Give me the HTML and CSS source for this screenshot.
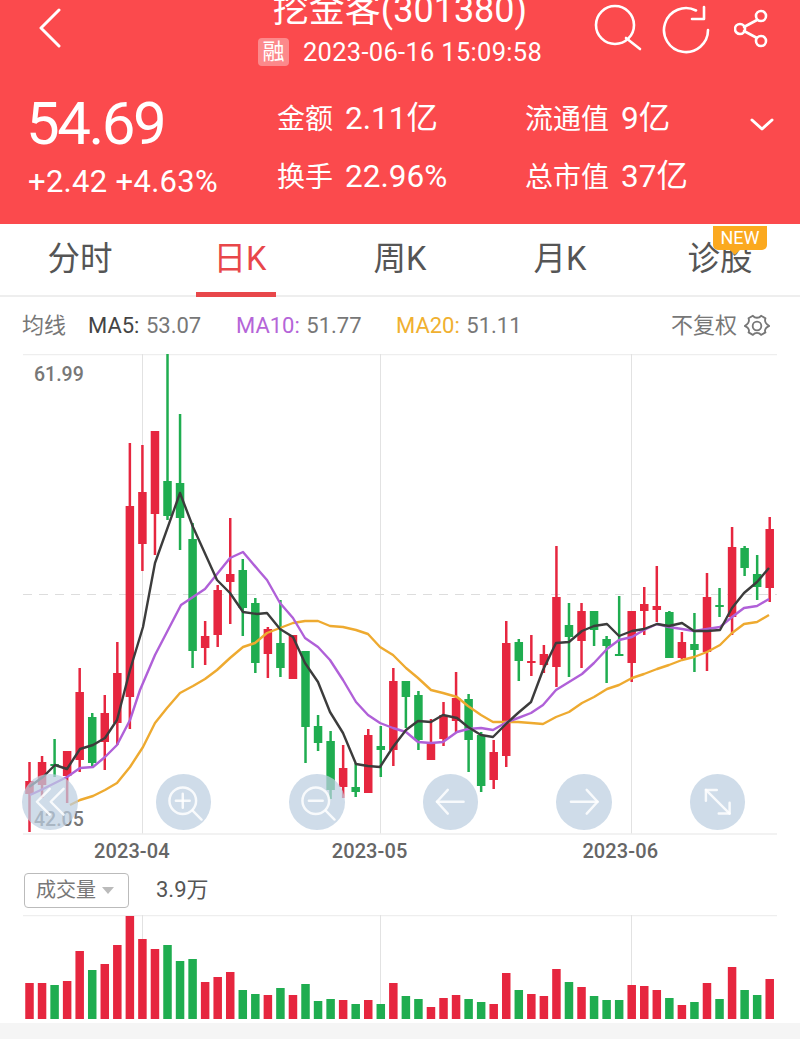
FILE: index.html
```html
<!DOCTYPE html>
<html lang="zh-CN">
<head>
  <meta charset="UTF-8">
  <meta name="viewport" content="width=device-width, initial-scale=1.0">
  <title>挖金客(301380)</title>
  <link rel="stylesheet" href="styles.css">
</head>
<body>
  <header class="quote">
    <div class="topbar">
      <svg class="back" viewBox="0 0 24 40" width="24" height="40"><polyline points="21,2 3,20 21,38"/></svg>
      <div class="heading">
        <h1>挖金客(301380)</h1>
        <div class="stamp"><span class="tag">融</span><span>2023-06-16 15:09:58</span></div>
      </div>
      <div class="actions">
        <svg viewBox="0 0 50 54" width="50" height="54">
          <circle cx="22" cy="25" r="19"/>
          <line x1="33" y1="38" x2="47" y2="49"/>
        </svg>
        <svg viewBox="0 0 50 54" width="50" height="54">
          <path d="M34 10.5A22 22 0 1 0 46 30"/>
          <polyline points="42,7 42,19 30,19"/>
        </svg>
        <svg viewBox="0 0 36 54" width="36" height="54">
          <line x1="23" y1="20" x2="10" y2="27"/>
          <line x1="10" y1="31" x2="23" y2="38"/>
          <circle cx="27" cy="16" r="5"/>
          <circle cx="6" cy="29" r="5"/>
          <circle cx="27" cy="41" r="5"/>
        </svg>
      </div>
    </div>
    <div class="summary">
      <div class="price">
        <div class="last">54.69</div>
        <div class="change">+2.42 +4.63%</div>
      </div>
      <div class="stat-col">
        <div class="stat"><span class="stat-name">金额</span>2.11亿</div>
        <div class="stat"><span class="stat-name">换手</span>22.96%</div>
      </div>
      <div class="stat-col">
        <div class="stat"><span class="stat-name">流通值</span>9亿</div>
        <div class="stat"><span class="stat-name">总市值</span>37亿</div>
      </div>
      <svg class="more" viewBox="0 0 24 14" width="24" height="14"><polyline points="2,2 12,11 22,2"/></svg>
    </div>
  </header>

  <nav class="tabs">
    <div class="tab">分时</div>
    <div class="tab active">日K</div>
    <div class="tab">周K</div>
    <div class="tab">月K</div>
    <div class="tab">诊股<span class="badge">NEW</span></div>
  </nav>

  <div class="legend">
    <span class="legend-title">均线</span>
    <span class="ma ma5">MA5: <em>53.07</em></span>
    <span class="ma ma10">MA10: <em>51.77</em></span>
    <span class="ma ma20">MA20: <em>51.11</em></span>
    <span class="adjust"><span class="adjust-name">不复权</span>
      <svg viewBox="0 0 24 24" width="26" height="26">
        <path d="M8.200 2.600c1 1.200 2.200 1.800 3.800 1.800s2.800-.6 3.800-1.800l4 2.300c-.6 1.500-.5 2.900.3 4.200s2 2.100 3.200 2.900c-1.200.8-2.400 1-3.200 2.300s-.9 2.700-.3 3.600l-4 2.300c-1-1.200-2.200-1.800-3.800-1.800s-2.800.6-3.800 1.800l-4-2.300c.6-.9.5-2.300-.3-3.600s-2-1.500-3.200-2.300c1.200-.8 2.400-1.600 3.200-2.900s.9-2.700.3-4.200z"/>
        <circle cx="12" cy="12" r="4"/>
      </svg>
    </span>
  </div>

  <section class="kline">
    <svg id="kline-chart" viewBox="0 354 800 481" width="800" height="481"></svg>
    <span class="axis-label axis-high">61.99</span>
    <span class="axis-label axis-low">42.05</span>
    <div class="chart-btns">
      <button class="chart-btn"><svg viewBox="0 0 40 40"><polyline points="20,7 7,20 20,33"/><polyline points="34,7 21,20 34,33"/></svg></button>
      <button class="chart-btn"><svg viewBox="0 0 40 40"><circle cx="19" cy="19" r="13.500"/><line x1="29" y1="29" x2="38" y2="38"/><line x1="12" y1="19" x2="26" y2="19"/><line x1="19" y1="12" x2="19" y2="26"/></svg></button>
      <button class="chart-btn"><svg viewBox="0 0 40 40"><circle cx="19" cy="19" r="13.500"/><line x1="29" y1="29" x2="38" y2="38"/><line x1="12" y1="19" x2="26" y2="19"/></svg></button>
      <button class="chart-btn"><svg viewBox="0 0 40 40"><polyline points="17,8 6,20 17,32"/><line x1="6" y1="20" x2="33" y2="20"/></svg></button>
      <button class="chart-btn"><svg viewBox="0 0 40 40"><polyline points="23,8 34,20 23,32"/><line x1="7" y1="20" x2="34" y2="20"/></svg></button>
      <button class="chart-btn"><svg viewBox="0 0 40 40"><line x1="8" y1="8" x2="32" y2="32"/><polyline points="8,19 8,8 19,8"/><polyline points="21,32 32,32 32,21"/></svg></button>
    </div>
  </section>

  <div class="dates">
    <span class="date date-apr">2023-04</span>
    <span class="date date-may">2023-05</span>
    <span class="date date-jun">2023-06</span>
  </div>

  <div class="vol-head">
    <div class="vol-select"><span class="vol-name">成交量</span><i class="caret"></i></div>
    <div class="vol-value">3.9万</div>
  </div>

  <svg id="vol-chart" viewBox="0 915 800 108" width="800" height="108"></svg>
  <div class="foot"></div>

  <script src="chart.js"></script>
</body>
</html>
```
FILE: styles.css
```css
* {
  box-sizing: border-box;
}

html, body {
  height: 100%;
}

body {
  margin: 0;
  overflow: hidden;
  background-color: #fff;
  font-family: Roboto, "Noto Sans CJK SC", sans-serif;
  color: #666;
}

/* red quote header */
.quote {
  height: 224px;
  background-color: #fb4a4d;
  color: #fff;
  overflow: hidden;
}

.quote svg {
  fill: none;
  stroke: #fff;
  stroke-linecap: round;
  stroke-linejoin: round;
}

.topbar {
  display: flex;
  height: 72px;
  margin-top: -10px;
  position: relative;
}

.back {
  margin: 18px 0 0 38px;
  stroke-width: 3;
}

.heading {
  position: absolute;
  left: 0;
  right: 0;
  top: 0;
  text-align: center;
}

.heading h1 {
  margin: 0;
  font-size: 36px;
  font-weight: 400;
  line-height: 40px;
}

.stamp {
  display: flex;
  justify-content: center;
  align-items: center;
  gap: 14px;
  margin-top: 7px;
  font-size: 25.500px;
  line-height: 30px;
  letter-spacing: 0.3px;
}

.tag {
  width: 31px;
  height: 28px;
  border-radius: 4px;
  background-color: rgba(255, 255, 255, 0.35);
  font-size: 22px;
  line-height: 28px;
  text-align: center;
  letter-spacing: 0;
}

.actions {
  display: flex;
  margin-left: auto;
  margin-right: 30px;
  padding-top: 10px;
}

.actions svg {
  stroke-width: 2.600;
  margin-left: 22px;
}

.actions svg:first-child {
  margin-left: 0;
}

.actions svg:nth-child(2) {
  margin-left: 19px;
}

.summary {
  display: flex;
  padding: 32px 0 0 26px;
  position: relative;
}

.price {
  width: 251px;
}

.last {
  font-size: 60px;
  line-height: 60px;
  letter-spacing: -2.500px;
}

.change {
  margin: 10px 0 0 2px;
  font-size: 31px;
  line-height: 36px;
  letter-spacing: 0.3px;
}

.stat-col {
  width: 248px;
  margin-top: 1px;
}

.stat {
  height: 58px;
  font-size: 31.500px;
  line-height: 48px;
}

.stat-name {
  margin-right: 12px;
  font-size: 28px;
}

.more {
  position: absolute;
  left: 750px;
  top: 56px;
  stroke-width: 3;
}

/* period tabs */
.tabs {
  display: flex;
  height: 73px;
  border-bottom: 2px solid #eee;
}

.tab {
  flex: 1;
  position: relative;
  font-size: 32.500px;
  line-height: 70px;
  text-align: center;
  color: #555;
}

.tab.active {
  color: #e8474a;
}

.tab.active::after {
  content: "";
  position: absolute;
  left: 36px;
  right: 44px;
  bottom: -2px;
  height: 5px;
  background-color: #e8474a;
}

.badge {
  position: absolute;
  left: 73px;
  top: 2px;
  width: 54px;
  height: 24px;
  border-radius: 0 0 5px 5px;
  background-color: #fba91f;
  color: #fff;
  font-size: 18px;
  line-height: 24px;
}

.badge::after {
  content: "";
  position: absolute;
  left: 17px;
  top: 24px;
  border: 5px solid transparent;
  border-top-color: #fba91f;
  border-bottom: 0;
}

/* moving average legend */
.legend {
  display: flex;
  align-items: center;
  height: 57px;
  padding: 0 30px 0 22px;
  font-size: 22px;
  color: #777;
}

.legend-title {
  width: 66px;
  margin-top: -5px;
}

.ma {
  white-space: pre;
}

.ma em {
  margin-left: 1px;
  font-style: normal;
  color: #777;
}

.ma5 {
  width: 148px;
  color: #444;
}

.ma10 {
  width: 160px;
  color: #b565d8;
}

.ma20 {
  color: #f0b030;
}

.adjust {
  display: flex;
  align-items: center;
  gap: 7px;
  margin-left: auto;
}

.adjust-name {
  margin-top: -5px;
}

.adjust svg {
  fill: none;
  stroke: #777;
  stroke-width: 1.700;
  stroke-linejoin: round;
}

/* k line chart */
.kline {
  position: relative;
  height: 481px;
}

#kline-chart, #vol-chart {
  display: block;
}

.axis-label {
  position: absolute;
  left: 34px;
  font-size: 19.500px;
  font-weight: 500;
  color: #777;
}

.axis-high {
  top: 9px;
}

.axis-low {
  top: 454px;
}

.chart-btns {
  position: absolute;
  left: 22px;
  top: 420px;
  display: flex;
  gap: 78px;
}

.chart-btn {
  width: 55.500px;
  height: 55.500px;
  padding: 8px;
  border: 0;
  border-radius: 50%;
  background-color: rgba(188, 206, 224, 0.72);
}

.chart-btn svg {
  display: block;
  fill: none;
  stroke: rgba(255, 255, 255, 0.85);
  stroke-width: 2.500;
  stroke-linecap: round;
  stroke-linejoin: round;
}

/* date axis */
.dates {
  display: flex;
  height: 38px;
  padding-left: 94px;
  font-size: 20px;
  font-weight: 500;
  line-height: 32px;
  letter-spacing: 0.1px;
  color: #666;
}

.date-may {
  margin-left: 162px;
}

.date-jun {
  margin-left: 175px;
}

/* volume */
.vol-head {
  display: flex;
  align-items: center;
  height: 42px;
  padding-left: 24px;
}

.vol-select {
  display: flex;
  align-items: center;
  width: 105px;
  height: 35px;
  margin-bottom: 7px;
  padding-left: 11px;
  border: 1px solid #bbb;
  border-radius: 4px;
  font-size: 20px;
  color: #777;
}

.vol-name {
  margin-top: -4px;
}

.caret {
  margin-left: 6px;
  border: 6px solid transparent;
  border-top: 7px solid #bbb;
  border-bottom: 0;
}

.vol-value {
  margin: 0 0 14px 27px;
  font-size: 22px;
  color: #555;
}

.foot {
  height: 20px;
  background-color: #f5f5f5;
}
```
FILE: chart.js
```js
// [color, high, top, bottom, low] in page pixels
const candles = [
  ['r',762,781,794,832],['r',756,762,785,798],['g',739,764,766,777],['r',751,751,776,803],
  ['r',668,692,760,772],['g',713,717,763,766],['r',695,713,742,770],['r',642,673,723,745],
  ['r',443,506,697,729],['r',445,492,544,571],['r',431,431,514,555],['g',354,481,516,520],
  ['g',414,483,518,550],['g',523,539,651,668],['r',621,636,648,665],['r',585,590,635,647],
  ['r',518,574,582,624],['g',559,570,608,636],['g',598,603,663,673],['r',627,629,654,678],
  ['g',600,643,668,677],['r',635,635,679,679],['g',651,651,727,763],['g',715,726,743,751],
  ['g',731,741,790,799],['r',745,768,787,798],['g',763,787,792,797],['r',729,735,793,793],
  ['g',726,746,750,777],['r',668,681,750,766],['g',681,681,697,728],['g',691,695,740,750],
  ['r',719,744,760,760],['r',702,715,739,746],['r',672,698,721,732],['g',694,699,740,772],
  ['g',732,735,786,792],['r',740,752,780,789],['r',621,643,756,767],['g',639,642,661,681],
  ['r',635,661,663,676],['r',645,654,665,673],['r',546,597,667,687],['g',603,625,637,677],
  ['r',603,611,641,668],['g',611,611,630,646],['g',636,639,646,683],['g',596,654,656,656],
  ['r',611,611,663,682],['r',587,604,611,635],['r',566,606,610,622],['g',611,612,658,658],
  ['r',632,642,658,659],['g',613,644,650,672],['r',573,597,652,671],['g',588,605,607,617],
  ['r',527,547,617,635],['g',546,548,568,576],['g',555,574,587,600],['r',517,529,588,602]
];

const volumes = [
  ['r',983],['r',983],['g',985],['r',981],['r',951],['g',970],['r',964],['r',945],['r',916],['r',939],
  ['r',949],['g',945],['g',961],['g',959],['r',982],['r',977],['r',972],['g',990],['g',994],['r',995],
  ['g',988],['r',995],['g',984],['g',1001],['g',999],['r',1000],['g',1004],['r',1000],['g',1004],['r',983],
  ['g',996],['g',999],['r',1007],['r',998],['r',995],['g',999],['g',1002],['r',1004],['r',973],['g',990],
  ['r',994],['r',996],['r',969],['g',982],['r',987],['g',996],['g',1000],['g',1000],['r',985],['r',986],
  ['r',990],['g',998],['r',1005],['g',1002],['r',983],['g',999],['r',967],['g',990],['g',995],['r',979]
];

const ma5 = '29,787 43,777 55,765 67,769 80,749 93,745 105,738 117,720 130,670 143,627 155,563 180,493 193,527 217,580 230,593 243,612 257,614 267,613 280,629 293,637 305,663 318,682 330,712 343,733 356,764 368,766 380,767 393,747 406,730 418,721 431,722 443,715 457,718 468,727 481,735 493,737 507,723 518,713 531,702 543,670 556,643 569,642 582,631 594,626 607,624 619,636 632,631 644,629 657,624 669,626 682,623 694,631 707,631 720,630 732,608 744,593 757,582 769,568';
const ma10 = '30,795 43,789 55,783 67,777 80,768 93,767 105,757 117,745 130,720 140,690 155,655 181,605 205,589 230,558 243,552 260,572 267,580 280,603 293,618 305,638 318,647 330,660 343,680 356,702 368,715 380,723 393,728 406,732 418,742 431,743 443,742 457,732 468,729 481,728 493,730 507,722 518,718 531,713 543,705 556,690 569,682 582,674 594,663 607,649 619,640 632,637 644,630 657,624 669,627 682,629 694,631 707,629 720,627 732,617 744,608 757,606 769,599';
const ma20 = '70,805 80,800 93,796 105,790 117,783 130,767 143,747 155,723 167,708 180,693 193,686 205,679 217,670 230,658 243,647 255,643 267,633 280,628 293,623 305,621 318,621 330,626 343,627 356,630 368,634 380,647 393,655 406,668 418,678 431,690 443,693 457,697 468,706 481,715 493,722 507,722 518,722 531,723 543,724 556,717 569,712 582,703 594,697 607,689 619,685 632,678 644,674 657,669 669,665 682,660 694,657 707,652 720,645 732,633 744,624 757,622 769,615';

const COLORS = { r: '#e6263f', g: '#1fad50' };
const GRID_X = [142.5, 380.5, 631.5];

function shape(svg, name, attrs) {
  const el = document.createElementNS('http://www.w3.org/2000/svg', name);
  Object.keys(attrs).forEach(key => el.setAttribute(key, attrs[key]));
  svg.appendChild(el);
}

function centerX(i) {
  return 29.5 + i * 12.546;
}

function drawGrid(svg, top, bottom) {
  shape(svg, 'line', { x1: 23, x2: 777, y1: top + 0.5, y2: top + 0.5, stroke: '#eee', 'stroke-width': 1.5 });
  GRID_X.forEach(x => {
    shape(svg, 'line', { x1: x, x2: x, y1: top, y2: bottom, stroke: '#e2e2e2', 'stroke-width': 1 });
  });
}

const kline = document.getElementById('kline-chart');
drawGrid(kline, 354, 834);
shape(kline, 'line', { x1: 23, x2: 777, y1: 834, y2: 834, stroke: '#eee', 'stroke-width': 1.5 });
shape(kline, 'line', { x1: 23, x2: 777, y1: 594.5, y2: 594.5, stroke: '#ddd', 'stroke-width': 1, 'stroke-dasharray': '9 7' });

candles.forEach((c, i) => {
  const x = centerX(i);
  shape(kline, 'line', { x1: x, x2: x, y1: c[1], y2: c[4], stroke: COLORS[c[0]], 'stroke-width': 2.5 });
  shape(kline, 'rect', { x: x - 4.25, y: c[2], width: 8.5, height: Math.max(c[3] - c[2], 2), fill: COLORS[c[0]] });
});

[[ma20, '#eeaa30'], [ma10, '#b060d8'], [ma5, '#3c3c3c']].forEach(line => {
  shape(kline, 'polyline', { points: line[0], fill: 'none', stroke: line[1], 'stroke-width': 2.4, 'stroke-linejoin': 'round' });
});

const vol = document.getElementById('vol-chart');
drawGrid(vol, 915, 1019);
volumes.forEach((v, i) => {
  shape(vol, 'rect', { x: centerX(i) - 4.25, y: v[1], width: 8.5, height: 1019 - v[1], fill: COLORS[v[0]] });
});
```
